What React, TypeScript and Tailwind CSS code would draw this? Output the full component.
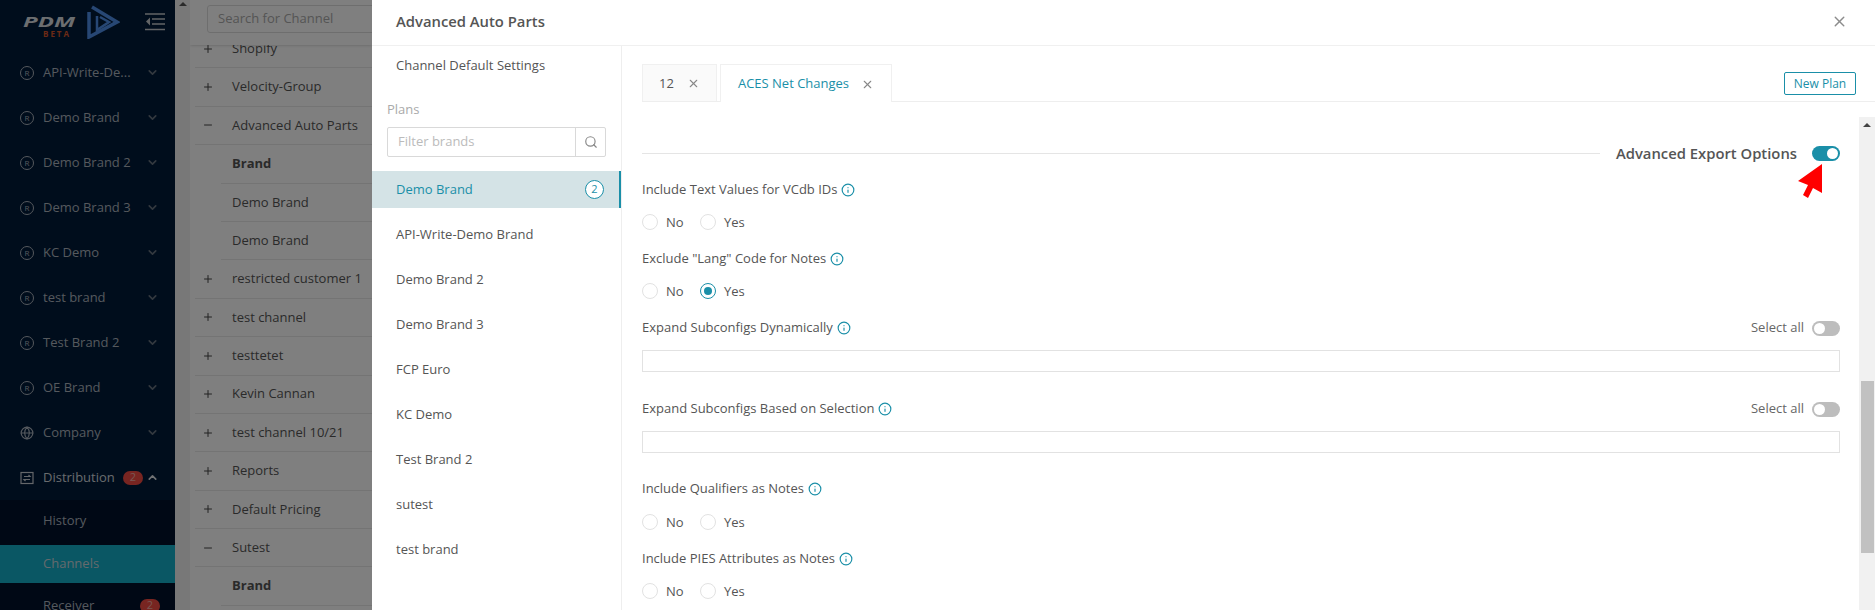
import { ChevronDown, ChevronUp, Globe, Minus, Plus, Search, X, Info } from "lucide-react";

const brands = ["API-Write-De...", "Demo Brand", "Demo Brand 2", "Demo Brand 3", "KC Demo", "test brand", "Test Brand 2", "OE Brand"];

const channels = [
	{ name: "Shopify", kind: "plus" },
	{ name: "Velocity-Group", kind: "plus" },
	{ name: "Advanced Auto Parts", kind: "minus" },
	{ name: "Brand", kind: "head" },
	{ name: "Demo Brand", kind: "sub" },
	{ name: "Demo Brand", kind: "sub" },
	{ name: "restricted customer 1", kind: "plus" },
	{ name: "test channel", kind: "plus" },
	{ name: "testtetet", kind: "plus" },
	{ name: "Kevin Cannan", kind: "plus" },
	{ name: "test channel 10/21", kind: "plus" },
	{ name: "Reports", kind: "plus" },
	{ name: "Default Pricing", kind: "plus" },
	{ name: "Sutest", kind: "minus" },
	{ name: "Brand", kind: "head" },
];

const plans = ["API-Write-Demo Brand", "Demo Brand 2", "Demo Brand 3", "FCP Euro", "KC Demo", "Test Brand 2", "sutest", "test brand"];

function Registered() {
	return (
		<span className="flex size-[14px] shrink-0 items-center justify-center rounded-full border border-[#aab2bc] text-[8px] leading-none text-[#aab2bc]">R</span>
	);
}

function SideRow({ name }: { name: string }) {
	return (
		<div className="flex h-[45px] items-center pl-[20px] pr-[16px] text-[13px] text-[#aab2bc]">
			<Registered />
			<span className="ml-[9px] flex-1 whitespace-nowrap">{name}</span>
			<ChevronDown size={13} strokeWidth={3} className="text-[#66717e]" />
		</div>
	);
}

function Sidebar() {
	return (
		<aside className="h-[610px] w-[175px] shrink-0 overflow-hidden bg-[#011a38]">
			<div className="flex h-[50px] items-center pl-[23px]">
				<div className="flex w-[58px] flex-col pt-[2px]">
					<span className="origin-left scale-x-[1.6] text-[15px] leading-[15px] font-bold italic text-[#d8dce0]">PDM</span>
					<span className="ml-[20px] mt-[1px] text-[8px] leading-[8px] font-bold tracking-[2px] text-[#d9552b]">BETA</span>
				</div>
				<svg width="34" height="34" viewBox="0 0 34 34" className="ml-[5px] -mt-[6px]" fill="none" stroke="#4f8ee8" strokeWidth="3.5">
					<path d="M3 7 L3 32 L31 17 L6 2" />
					<path d="M11 11 L11 25 L23 17 L14 12" strokeWidth="2.5" />
				</svg>
				<svg width="20" height="18" viewBox="0 0 20 18" className="ml-[25px] -mt-[6px]" stroke="#c4c8cc" strokeWidth="1.6" fill="none">
					<path d="M0 1H20M7 6H20M7 11H20M0 16.5H20" />
					<path d="M5 4.5 L1 8.5 L5 12.5Z" fill="#c4c8cc" stroke="none" />
				</svg>
			</div>
			{brands.map((b, i) => (
				<SideRow key={i} name={b} />
			))}
			<div className="flex h-[45px] items-center pl-[20px] pr-[16px] text-[13px] text-[#aab2bc]">
				<Globe size={14} className="shrink-0 text-[#aab2bc]" />
				<span className="ml-[9px] flex-1">Company</span>
				<ChevronDown size={13} strokeWidth={3} className="text-[#66717e]" />
			</div>
			<div className="flex h-[45px] items-center pl-[20px] pr-[16px] text-[13px] text-[#d0d6dc]">
				<svg width="14" height="14" viewBox="0 0 14 14" fill="none" stroke="#c8ced4" strokeWidth="1.2" className="shrink-0">
					<rect x="1" y="1.5" width="12" height="11" />
					<path d="M4 5.5H10L8.5 4M10 8.5H4L5.5 10" />
				</svg>
				<span className="ml-[9px]">Distribution</span>
				<span className="ml-[8px] flex h-[14px] w-[20px] items-center justify-center rounded-full bg-[#f04a42] text-[11px] text-[#f0b0a8]">2</span>
				<ChevronUp size={13} strokeWidth={3} className="ml-auto text-[#e0e4e8]" />
			</div>
			<div className="bg-[#00102a] pb-[4px]">
				<div className="flex h-[41px] items-center pl-[43px] text-[13px] text-[#aab2bc]">History</div>
			</div>
			<div className="flex h-[38px] items-center bg-[#14aec8] pl-[43px] text-[13px] text-[#c8d4da]">Channels</div>
			<div className="flex h-[45px] items-center bg-[#00102a] pl-[43px] pr-[15px] text-[13px] text-[#aab2bc]">
				<span className="flex-1">Receiver</span>
				<span className="flex h-[14px] w-[20px] items-center justify-center rounded-full bg-[#f04a42] text-[11px] text-[#f0b0a8]">2</span>
			</div>
		</aside>
	);
}

function ChannelRow({ name, kind }: { name: string; kind: string }) {
	const hasIcon = kind === "plus" || kind === "minus";
	return (
		<div className={`flex h-[38.4px] shrink-0 items-center ${hasIcon ? "border-b border-[#e9e9e9]" : ""}`}>
			<span className="flex h-full w-[26px] shrink-0 items-center justify-center text-[#444]">
				{kind === "plus" && <Plus size={12} />}
				{kind === "minus" && <Minus size={12} />}
			</span>
			<span className={`flex h-full flex-1 items-center whitespace-nowrap pl-[11px] text-[13px] text-[#555] ${kind === "head" ? "font-bold" : ""} ${hasIcon ? "" : "border-b border-[#e9e9e9]"}`}>{name}</span>
		</div>
	);
}

function Background() {
	return (
		<div className="flex h-[610px] w-[197px] shrink-0 bg-white">
			<div className="flex w-[15px] shrink-0 flex-col items-center bg-[#f1f1f1]">
				<span className="mt-[2px] size-0 border-x-[4px] border-b-[4px] border-x-transparent border-b-[#555]" />
			</div>
			<div className="w-[182px] shrink-0 overflow-hidden">
				<div className="relative z-10 flex h-[45px] items-start bg-white pl-[17px] pt-[5px] shadow">
					<div className="flex h-[28px] w-[180px] shrink-0 items-center rounded-[3px] border border-[#ddd] pl-[10px] text-[13px] text-[#aaa]">Search for Channel</div>
				</div>
				<div className="-mt-[15px] flex flex-col pl-[5px]">
					{channels.map((c, i) => (
						<ChannelRow key={i} name={c.name} kind={c.kind} />
					))}
				</div>
			</div>
		</div>
	);
}

function Switch({ on }: { on?: boolean }) {
	return (
		<span className={`flex h-[15px] w-[28px] shrink-0 items-center rounded-full px-[2px] ${on ? "justify-end bg-[#1a8fa8]" : "justify-start bg-[#bdbdbd]"}`}>
			<span className="size-[11px] rounded-full bg-white" />
		</span>
	);
}

function Label({ text, className = "" }: { text: string; className?: string }) {
	return (
		<div className={`flex h-[20px] items-center text-[#555] ${className}`}>
			<span>{text}</span>
			<Info size={14} className="ml-[4px] text-[#1a8fa8]" />
		</div>
	);
}

function Radios({ selected, className = "" }: { selected?: boolean; className?: string }) {
	return (
		<div className={`flex h-[20px] items-center text-[#555] ${className}`}>
			<span className="size-[16px] rounded-full border border-[#e2e2e2] bg-white" />
			<span className="ml-[8px] w-[24px] pt-[1px]">No</span>
			<span className={`ml-[10px] flex size-[16px] items-center justify-center rounded-full border bg-white ${selected ? "border-[#1a8fa8]" : "border-[#e2e2e2]"}`}>
				{selected && <span className="size-[8px] rounded-full bg-[#1a8fa8]" />}
			</span>
			<span className="ml-[8px] pt-[1px]">Yes</span>
		</div>
	);
}

function SelectLabel({ text, className = "" }: { text: string; className?: string }) {
	return (
		<div className={`flex h-[20px] items-center text-[#555] ${className}`}>
			<span>{text}</span>
			<Info size={14} className="ml-[4px] text-[#1a8fa8]" />
			<span className="ml-auto mr-[8px] text-[#666]">Select all</span>
			<Switch />
		</div>
	);
}

function Modal() {
	return (
		<div className="absolute inset-y-0 left-[372px] right-0 z-30 flex flex-col overflow-hidden bg-white text-[13px]" style={{ fontFamily: "'Open Sans', 'Noto Sans', sans-serif" }}>
			<header className="flex h-[46px] shrink-0 items-center justify-between border-b border-[#f0f0f0] pb-[3px] pl-[24px] pr-[27px]">
				<span className="text-[14.8px] font-semibold text-[#555]">Advanced Auto Parts</span>
				<X size={17} className="text-[#8c8c8c]" />
			</header>
			<div className="flex min-h-0 flex-1">
				<nav className="flex w-[250px] shrink-0 flex-col border-r border-[#eee] text-[#555]">
					<div className="flex h-[38px] shrink-0 items-center pl-[24px] pt-[1px]">Channel Default Settings</div>
					<div className="mt-[16px] pl-[15px] text-[#aaa]">Plans</div>
					<div className="ml-[15px] mt-[7px] flex h-[30px] w-[219px] shrink-0 items-stretch rounded-[2px] border border-[#d9d9d9]">
						<span className="flex flex-1 items-center border-r border-[#d9d9d9] pl-[10px] text-[#bbb]">Filter brands</span>
						<span className="flex w-[29px] items-center justify-center">
							<Search size={14} className="text-[#888]" />
						</span>
					</div>
					<div className="mt-[14.5px] flex h-[37px] shrink-0 items-center border-r-2 border-[#1a8fa8] bg-[#d4e3e6] pl-[24px] pr-[15px] text-[#1a8fa8]">
						<span className="flex-1">Demo Brand</span>
						<span className="flex size-[19px] items-center justify-center rounded-full border border-[#1a8fa8] bg-white text-[11px]">2</span>
					</div>
					<div className="mt-[4px] flex flex-col">
						{plans.map((p) => (
							<div key={p} className="flex h-[45px] shrink-0 items-center pl-[24px]">{p}</div>
						))}
					</div>
				</nav>
				<section className="flex min-w-0 flex-1 flex-col">
					<div className="mt-[18px] ml-[20px] flex h-[38px] shrink-0 items-stretch border-b border-[#eee]">
						<div className="flex w-[75px] items-center justify-center gap-[13px] border border-b-0 border-[#f0f0f0] bg-[#fafafa] pt-[1px] text-[#555]">
							<span>12</span>
							<X size={13} className="text-[#888]" />
						</div>
						<div className="ml-[3px] -mb-px flex w-[172px] items-center justify-center gap-[12px] border border-b-0 border-[#f0f0f0] bg-white pt-[1px] text-[#1a8fa8]">
							<span>ACES Net Changes</span>
							<X size={13} className="text-[#888]" />
						</div>
						<div className="ml-auto mr-[19px] mt-[8px] flex h-[23px] w-[72px] items-center justify-center rounded-[2px] border border-[#1a8fa8] text-[12px] text-[#1a8fa8]">New Plan</div>
					</div>
					<div className="flex min-h-0 flex-1">
						<div className="min-w-0 flex-1 overflow-hidden pl-[20px] pr-[19px]">
							<div className="mt-[41px] flex h-[20px] items-center">
								<span className="h-px flex-1 bg-[#e5e5e5]" />
								<span className="ml-[16px] text-[14.8px] font-semibold text-[#555]">Advanced Export Options</span>
								<span className="relative ml-[15px]">
									<Switch on />
									<svg width="32" height="36" viewBox="0 0 32 36" className="absolute left-[-15px] top-[18px]" fill="#ff0000">
										<path d="M25 0 L25 29 L16 24 L11 34 L6 31 L11 21 L1 17Z" />
									</svg>
								</span>
							</div>
							<Label text="Include Text Values for VCdb IDs" className="mt-[17px]" />
							<Radios className="mt-[12px]" />
							<Label text={'Exclude "Lang" Code for Notes'} className="mt-[17px]" />
							<Radios selected className="mt-[12px]" />
							<SelectLabel text="Expand Subconfigs Dynamically" className="mt-[17px]" />
							<div className="mt-[12px] h-[22px] border border-[#e2e2e2]" />
							<SelectLabel text="Expand Subconfigs Based on Selection" className="mt-[27px]" />
							<div className="mt-[12px] h-[22px] border border-[#e2e2e2]" />
							<Label text="Include Qualifiers as Notes" className="mt-[26px]" />
							<Radios className="mt-[13px]" />
							<Label text="Include PIES Attributes as Notes" className="mt-[17px]" />
							<Radios className="mt-[12px]" />
						</div>
						<div className="mt-[15px] flex w-[16px] shrink-0 flex-col items-center bg-[#f1f1f1]">
							<span className="mt-[6px] size-0 border-x-[4px] border-b-[4px] border-x-transparent border-b-[#444]" />
							<span className="mt-[254px] h-[172px] w-[13px] bg-[#c1c1c1]" />
						</div>
					</div>
				</section>
			</div>
		</div>
	);
}

export default function App() {
	return (
		<div className="relative flex h-[610px] w-[1875px] overflow-hidden bg-white" style={{ fontFamily: "'Open Sans', 'Noto Sans', sans-serif" }}>
			<Sidebar />
			<Background />
			<div className="absolute inset-0 z-20 bg-black/50" />
			<Modal />
		</div>
	);
}
